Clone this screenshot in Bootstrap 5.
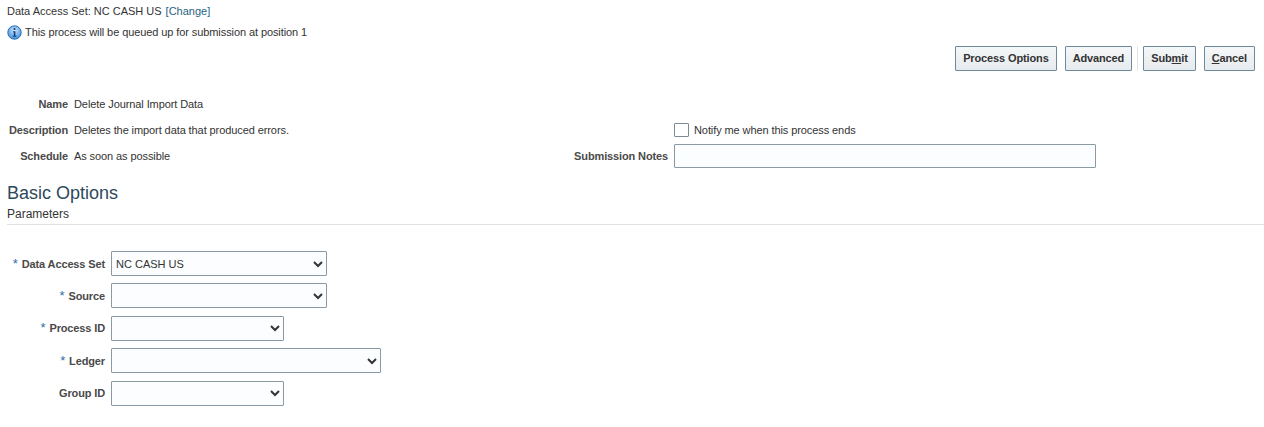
<!DOCTYPE html>
<html lang="en">
<head>
<meta charset="utf-8">
<title>Delete Journal Import Data</title>
<link href="https://cdn.jsdelivr.net/npm/bootstrap@5.3.0/dist/css/bootstrap.min.css" rel="stylesheet">
<style>
body { font-family: "Liberation Sans", Arial, sans-serif; font-size: 11px; color: #333; background: #fff; line-height: 13px; height: 427px; overflow: hidden; letter-spacing: -0.09px; }
.page-wrap { padding: 5px 0 0 7px; }
.access-line { height: 13px; letter-spacing: 0; }
.access-val { margin-left: 3px; }
.access-line a { color: #1f6284; text-decoration: none; margin-left: 4px; }
.info-line { margin-top: 6px; height: 16px; gap: 3px; }
.action-bar { margin-top: 5px; height: 26px; padding-right: 9px; gap: 8px; }
.act-btn { font-family: inherit; font-size: 11px; font-weight: 700; line-height: 13px; letter-spacing: -0.13px; color: #333; height: 25px; padding: 0 7px; border: 1px solid #6c8a9c; border-radius: 1px; background: linear-gradient(#f5f7f8, #e7ebee); }
.act-btn:hover { color: #333; border-color: #6c8a9c; }
.act-sep { width: 1px; height: 25px; background: #e1e5e8; margin: 0 -3px; }
.summary-grid { display: grid; grid-template-columns: 61px 496px 92px 422px; column-gap: 6px; margin-top: 20px; }
.summary-grid > div { height: 26px; display: flex; align-items: center; }
.lbl { font-weight: 700; color: #4a4a4a; justify-content: flex-end; text-align: right; white-space: nowrap; letter-spacing: -0.13px; }
.notify { gap: 5px; }
.form-check-input[type=checkbox].notify-box { width: 15px; height: 14px; margin: 0; border: 1px solid #7c8d99; border-radius: 1px; flex: none; }
.notes-box { width: 422px; height: 24px; min-height: 24px; border: 1px solid #8a9aa5; border-radius: 1px; padding: 0 4px; font-size: 11px; background: #fbfdfe; }
.section-title { font-family: inherit; font-size: 18px; line-height: 22px; letter-spacing: 0; color: #2d4a5c; font-weight: 400; margin: 13px 0 0; }
.section-sub { margin-top: 4px; height: 13px; font-size: 12px; letter-spacing: 0; }
.rule { height: 1px; background: #dfe2e4; margin: 3px 0 0 0; }
.param-list { margin-top: 26px; gap: 7.4px; }
.param-row { display: flex; align-items: center; gap: 6px; height: 25px; }
.param-lbl { width: 98px; text-align: right; font-weight: 700; color: #4a4a4a; white-space: nowrap; letter-spacing: -0.13px; }
.req { color: #2f6ea5; font-weight: 400; margin-right: 4px; font-size: 13px; }
.pick { font-family: inherit; font-size: 11px; line-height: 13px; color: #333; height: 25px; padding: 1px 20px 0 4px; border: 1px solid #8a9aa5; border-radius: 1px; background-color: #fbfdfe; background-size: 12px 8px; background-position: right 2px center; background-image: url("data:image/svg+xml,%3csvg xmlns='http://www.w3.org/2000/svg' viewBox='0 0 12 8'%3e%3cpath fill='none' stroke='%23333' stroke-width='2' d='M2 2l4 4 4-4'/%3e%3c/svg%3e"); }
.w-216 { width: 216px; }
.w-173 { width: 173px; }
.w-270 { width: 270px; }
</style>
</head>
<body>
<div class="page-wrap">
  <div class="access-line">Data Access Set:<span class="access-val">NC CASH US</span><a href="#">[Change]</a></div>
  <div class="info-line d-flex align-items-center">
    <svg width="15" height="15" viewBox="0 0 15 15" aria-hidden="true">
      <defs><radialGradient id="ig" cx="50%" cy="35%" r="65%"><stop offset="0" stop-color="#cfe6fb"/><stop offset="1" stop-color="#3f8fdc"/></radialGradient></defs>
      <circle cx="7.5" cy="7.5" r="6.7" fill="url(#ig)" stroke="#2a6db5"/>
      <circle cx="7.5" cy="4" r="1.1" fill="#123f78"/>
      <path d="M6 6.2h2.4v4.6h1v1H5.8v-1h1V7.2H6z" fill="#123f78"/>
    </svg>
    <span>This process will be queued up for submission at position 1</span>
  </div>
  <div class="action-bar d-flex justify-content-end align-items-center">
    <button type="button" class="btn act-btn">Process Options</button>
    <button type="button" class="btn act-btn">Advanced</button>
    <span class="act-sep"></span>
    <button type="button" class="btn act-btn">Sub<u>m</u>it</button>
    <button type="button" class="btn act-btn"><u>C</u>ancel</button>
  </div>
  <div class="summary-grid">
    <div class="lbl">Name</div><div>Delete Journal Import Data</div><div></div><div></div>
    <div class="lbl">Description</div><div>Deletes the import data that produced errors.</div><div></div>
    <div class="notify"><input type="checkbox" class="notify-box form-check-input" id="nt"><label for="nt">Notify me when this process ends</label></div>
    <div class="lbl">Schedule</div><div>As soon as possible</div><div class="lbl">Submission Notes</div>
    <div><input type="text" class="notes-box form-control" aria-label="Submission Notes"></div>
  </div>
  <h2 class="section-title">Basic Options</h2>
  <div class="section-sub">Parameters</div>
  <div class="rule"></div>
  <div class="param-list d-flex flex-column">
    <div class="param-row"><span class="param-lbl"><span class="req">*</span>Data Access Set</span><select class="form-select pick w-216"><option>NC CASH US</option></select></div>
    <div class="param-row"><span class="param-lbl"><span class="req">*</span>Source</span><select class="form-select pick w-216"><option></option></select></div>
    <div class="param-row"><span class="param-lbl"><span class="req">*</span>Process ID</span><select class="form-select pick w-173"><option></option></select></div>
    <div class="param-row"><span class="param-lbl"><span class="req">*</span>Ledger</span><select class="form-select pick w-270"><option></option></select></div>
    <div class="param-row"><span class="param-lbl">Group ID</span><select class="form-select pick w-173"><option></option></select></div>
  </div>
</div>
<script src="https://cdn.jsdelivr.net/npm/bootstrap@5.3.0/dist/js/bootstrap.bundle.min.js"></script>
</body>
</html>
